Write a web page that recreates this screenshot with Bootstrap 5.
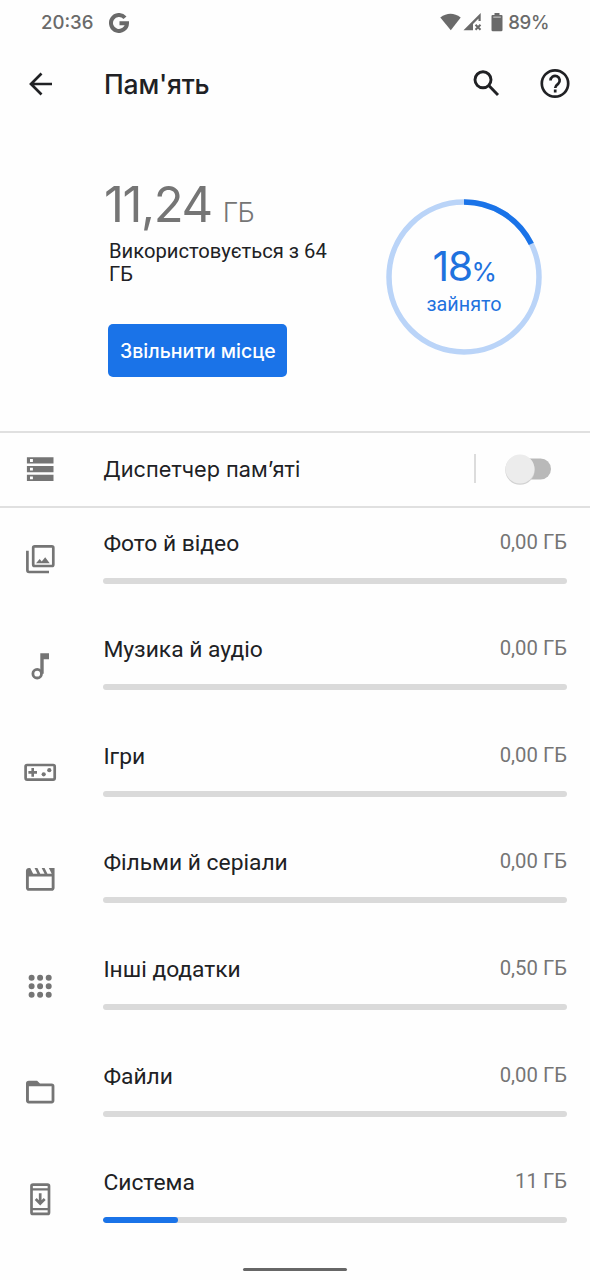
<!DOCTYPE html>
<html lang="uk">
<head>
<meta charset="utf-8">
<meta name="viewport" content="width=device-width, initial-scale=1">
<title>Пам'ять</title>
<link href="https://cdn.jsdelivr.net/npm/bootstrap@5.3.0/dist/css/bootstrap.min.css" rel="stylesheet">
<style>
  body { background: #fefefe; color: #202124; font-family: Roboto, "Noto Sans", sans-serif; width: 590px; height: 1280px; overflow: hidden; }
  .gs { font-family: Inter, Roboto, sans-serif; }
  svg { display: block; flex: none; }
  .statusbar { height: 44px; color: #6a6a6a; font-size: 18.6px; font-weight: 500; padding: 1px 41px 0 41px; }
  .statusbar .glyph { margin-left: 16px; }
  .statusbar .battery { margin-left: 4px; letter-spacing: -.4px; }
  .appbar { height: 79px; padding: 0 15px 0 20px; }
  .appbar h1 { font-size: 26.5px; font-weight: 500; margin: 2px 0 0 44px; letter-spacing: -.2px; }
  .appbar .help { margin-left: 29px; }
  .summary { height: 308px; padding: 52px 48px 0 104px; }
  .used { font-size: 49px; line-height: 60px; color: #757575; font-weight: 400; letter-spacing: -1.4px; }
  .used .unit { font-size: 27px; letter-spacing: -.8px; margin-left: 11px; font-weight: 300; }
  .total { font-size: 20.2px; line-height: 23.3px; width: 235px; margin: -3px 0 0 5px; }
  .btn-free { --bs-btn-bg: #1a73e8; --bs-btn-color: #fff; --bs-btn-border-width: 0; --bs-btn-border-radius: 5px; width: 179px; height: 53px; margin: 37px 0 0 4.4px; padding: 3px 0 0; font-size: 19.5px; font-weight: 500; }
  .ring { width: 156px; height: 156px; margin-top: 24px; color: #1f72de; }
  .ring .label { inset: 0; }
  .pct { font-size: 41px; line-height: 48px; font-weight: 400; margin-top: 43px; letter-spacing: -1.5px; }
  .pct .sign { font-size: 26px; }
  .state { font-size: 19.8px; line-height: 28px; margin-top: -5px; }
  .manager { height: 77px; border-top: 2px solid #e0e0e0; border-bottom: 2px solid #e0e0e0; padding: 0 38px 2px 20px; color: #202124; }
  .manager .name { font-size: 21.7px; margin: 2px 0 0 43px; }
  .divider { width: 2px; height: 29px; background: #dcdcdc; margin-right: 29px; }
  .toggle { width: 47px; height: 32px; }
  .cat { height: 106.67px; padding: 0 23px 0 20px; }
  .cat .icon { margin-top: 31px; color: #757575; }
  .cat .body { margin-left: 43.4px; padding-top: 18.5px; }
  .cat .name { font-size: 22.8px; line-height: 34px; }
  .cat .size { font-size: 20.3px; line-height: 30px; color: #757575; }
  .cat .progress { --bs-progress-height: 6px; --bs-progress-bg: #dadada; --bs-progress-border-radius: 3px; --bs-progress-bar-bg: #1a73e8; margin-top: 17px; }
  .cat .progress-bar { border-radius: 3px; }
  .homebar { left: 243px; top: 1268px; width: 104px; height: 3px; border-radius: 2px; background: #666; }
</style>
</head>
<body class="position-relative">
<header>
  <div class="statusbar gs d-flex align-items-center">
    <span>20:36</span>
    <svg class="glyph" width="20" height="20" viewBox="0 0 20 20" fill="none" stroke="#6a6a6a" stroke-width="4"><path d="M16 4.700A8 8 0 1 0 18 10.200H10.500"/></svg>
    <svg class="ms-auto" width="64" height="22" viewBox="0 0 64 22" fill="#6a6a6a">
      <path d="M.3 5.500Q10.500-2 20.700 5.500L10.800 18.300z"/>
      <path d="M23.500 18.300 40.700 1v8h-2.200V6.500L33 12v6.300z"/>
      <path d="M35.500 12.700l5 5M40.500 12.700l-5 5" stroke="#6a6a6a" stroke-width="2"/>
      <path d="M54.500 1h5v2h2q1 0 1 1v14q0 1.300-1.300 1.300h-8.400q-1.300 0-1.300-1.300V4q0-1 1-1h2z"/><path d="M53.300 4.500h7.500v1.300h-7.500z" fill="#bbb"/>
    </svg>
    <span class="battery">89%</span>
  </div>
  <nav class="appbar d-flex align-items-center">
    <svg width="40" height="40" viewBox="0 0 40 40" fill="none" stroke="#202124" stroke-width="2.700"><path d="M32 20H11M21.500 9.500 11 20l10.500 10.500"/></svg>
    <h1 class="gs">Пам'ять</h1>
    <svg class="ms-auto" width="40" height="40" viewBox="0 0 40 40" fill="none" stroke="#202124" stroke-width="2.900"><circle cx="17" cy="15.800" r="8"/><path d="M22.800 21.600 32 31"/></svg>
    <svg class="help" width="40" height="40" viewBox="0 0 40 40" fill="none" stroke="#202124" stroke-width="2.700"><circle cx="20" cy="19.500" r="13.200"/><path d="M15.500 16.500a4.600 4.600 0 1 1 7.600 3.400C21 21.500 20.200 22 20.200 24M20.200 25.600v2.800"/></svg>
  </nav>
</header>
<main>
  <section class="summary d-flex justify-content-between">
    <div>
      <div class="used gs">11,24<span class="unit">ГБ</span></div>
      <div class="total">Використовується з 64 ГБ</div>
      <button class="btn btn-free gs" type="button">Звільнити місце</button>
    </div>
    <div class="ring position-relative">
      <svg width="156" height="156" viewBox="0 0 156 156" fill="none" stroke-width="5.500"><circle cx="78" cy="78" r="75" stroke="#bad4f8"/><path d="M78 3A75 75 0 0 1 145.300 44.900" stroke="#1a73e8"/></svg>
      <div class="label position-absolute text-center">
        <div class="pct gs">18<span class="sign">%</span></div>
        <div class="state">зайнято</div>
      </div>
    </div>
  </section>
  <section class="manager d-flex align-items-center">
    <svg width="40" height="40" viewBox="0 0 40 40" fill="#757575"><path fill-rule="evenodd" d="M6.900 8.300h26.600v6.300H6.900zM10 10v2.900h2.900V10zM6.900 17h26.600v6.300H6.900zM10 18.700v2.900h2.900v-2.900zM6.900 25.700h26.600V32H6.900zM10 27.400v2.900h2.900v-2.900z"/></svg>
    <span class="name gs">Диспетчер пам’яті</span>
    <span class="divider ms-auto"></span>
    <svg class="toggle" viewBox="0 0 47 32"><rect x="8" y="5.500" width="38" height="21" rx="10.500" fill="#b9b9b9"/><circle cx="15" cy="17" r="14.700" fill="#d2d2d2"/><circle cx="15" cy="16" r="14.500" fill="#ececec"/></svg>
  </section>
  <section>
    <div class="cat d-flex">
      <svg class="icon" width="40" height="40" viewBox="0 0 40 40" fill="none" stroke="currentColor" stroke-width="2.700"><rect x="13.200" y="7.300" width="20.100" height="19.700" rx="1.500"/><path d="M7.400 11.700v19.600q0 1.700 1.700 1.700H29"/><path d="M16 24.300l3.700-4.300 2 2.500 3.500-4.300 4.500 6.100z" fill="currentColor" stroke="none"/></svg>
      <div class="body flex-grow-1"><div class="d-flex justify-content-between"><span class="name">Фото й відео</span><span class="size">0,00 ГБ</span></div><div class="progress"></div></div>
    </div>
    <div class="cat d-flex">
      <svg class="icon" width="40" height="40" viewBox="0 0 40 40"><path fill="currentColor" d="M20.300 7.300H29v5.900h-5.300v14.500h-3.400z"/><circle cx="17.200" cy="27.700" r="4.300" fill="none" stroke="currentColor" stroke-width="2.800"/></svg>
      <div class="body flex-grow-1"><div class="d-flex justify-content-between"><span class="name">Музика й аудіо</span><span class="size">0,00 ГБ</span></div><div class="progress"></div></div>
    </div>
    <div class="cat d-flex">
      <svg class="icon" width="40" height="40" viewBox="0 0 40 40" fill="currentColor"><rect x="5.600" y="13" width="29.100" height="14.600" rx="1.500" fill="none" stroke="currentColor" stroke-width="2.700"/><path d="M11.400 16.100H14v3h3v2.600h-3v3h-2.600v-3h-3v-2.600h3z"/><circle cx="23.700" cy="22.300" r="2.100"/><circle cx="29.300" cy="18.200" r="2.100"/></svg>
      <div class="body flex-grow-1"><div class="d-flex justify-content-between"><span class="name">Ігри</span><span class="size">0,00 ГБ</span></div><div class="progress"></div></div>
    </div>
    <div class="cat d-flex">
      <svg class="icon" width="40" height="40" viewBox="0 0 40 40"><path transform="translate(3.100 3.200) scale(1.430)" fill="currentColor" fill-rule="evenodd" d="M4 10h16v8H4zM22 4h-4l2 4h-3l-2-4h-2l2 4h-3l-2-4H8l2 4H7L5 4H4C2.900 4 2 4.900 2 6v12c0 1.100.9 2 2 2h16c1.100 0 2-.9 2-2z"/></svg>
      <div class="body flex-grow-1"><div class="d-flex justify-content-between"><span class="name">Фільми й серіали</span><span class="size">0,00 ГБ</span></div><div class="progress"></div></div>
    </div>
    <div class="cat d-flex">
      <svg class="icon" width="40" height="40" viewBox="0 0 40 40" fill="none" stroke="currentColor" stroke-width="6" stroke-linecap="round"><path d="M11.600 11.700h0M20.100 11.700h0M28.700 11.700h0M11.600 20.200h0M20.100 20.200h0M28.700 20.200h0M11.600 28.700h0M20.100 28.700h0M28.700 28.700h0"/></svg>
      <div class="body flex-grow-1"><div class="d-flex justify-content-between"><span class="name">Інші додатки</span><span class="size">0,50 ГБ</span></div><div class="progress"></div></div>
    </div>
    <div class="cat d-flex">
      <svg class="icon" width="40" height="40" viewBox="0 0 40 40"><path fill="currentColor" fill-rule="evenodd" d="M8.800 8.700h8.300l2.900 2.700h11.600q2.800 0 2.800 2.800v14.400q0 2.800-2.800 2.800H8.800Q6 31.400 6 28.600V11.500q0-2.800 2.800-2.800zM8.900 14.200v14.500h22.700V14.200z"/></svg>
      <div class="body flex-grow-1"><div class="d-flex justify-content-between"><span class="name">Файли</span><span class="size">0,00 ГБ</span></div><div class="progress"></div></div>
    </div>
    <div class="cat d-flex">
      <svg class="icon" width="40" height="40" viewBox="0 0 40 40" fill="none" stroke="currentColor" stroke-width="2.700"><rect x="11.500" y="5.600" width="17.500" height="29.300" rx="1.500"/><path d="M11.500 10.300H29M11.500 30.200H29" stroke-width="2.300"/><path d="M20.200 14.300v9.500M15.700 20l4.500 4.500 4.500-4.500"/></svg>
      <div class="body flex-grow-1"><div class="d-flex justify-content-between"><span class="name">Система</span><span class="size">11 ГБ</span></div><div class="progress"><div class="progress-bar" style="width:16%"></div></div></div>
    </div>
  </section>
</main>
<div class="homebar position-absolute"></div>
<script src="https://cdn.jsdelivr.net/npm/bootstrap@5.3.0/dist/js/bootstrap.bundle.min.js"></script>
</body>
</html>
